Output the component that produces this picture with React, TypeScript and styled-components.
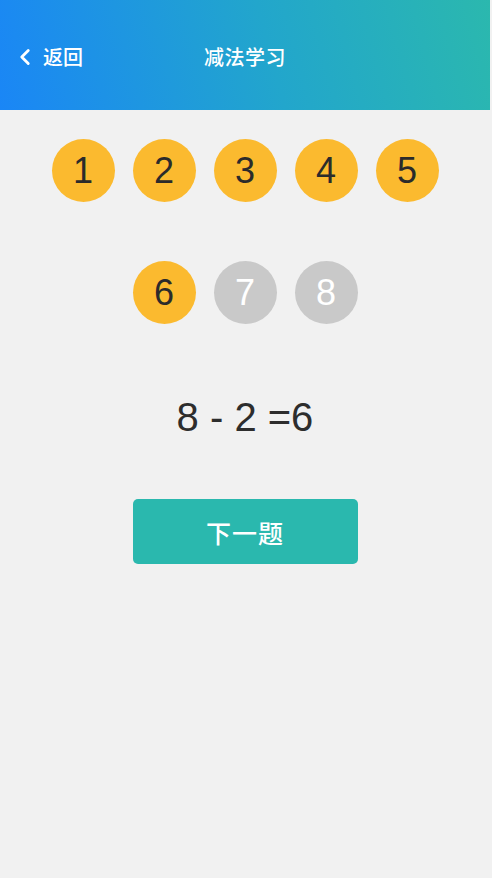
import styled, { createGlobalStyle } from "styled-components";
import { ChevronLeft } from "lucide-react";

const GlobalStyle = createGlobalStyle`
  html, body {
    margin: 0;
    padding: 0;
    background-color: #f1f1f1;
  }
  body {
    font-family: "Liberation Sans", "Noto Sans CJK SC", sans-serif;
  }
`;

const rows = [
  [1, 2, 3, 4, 5],
  [6, 7, 8],
];
const answered = 6;

const App = () => {
  return (
    <>
      <GlobalStyle />
      <Page>
        <Header>
          <BackBtn>
            <ChevronLeft size={26} strokeWidth={2.6} />
            返回
          </BackBtn>
          <Title>减法学习</Title>
        </Header>

        <Content>
          {rows.map((row, i) => (
            <CircleRow key={i}>
              {row.map((n) => (
                <Circle key={n} done={n <= answered}>
                  {n}
                </Circle>
              ))}
            </CircleRow>
          ))}

          <Equation>8 - 2 =6</Equation>

          <NextBtn>下一题</NextBtn>
        </Content>
      </Page>
    </>
  );
};

export default App;

const Page = styled.div`
  width: 490px;
  min-height: 878px;
  background-color: #f1f1f1;
`;

const Header = styled.div`
  position: relative;
  display: flex;
  align-items: center;
  justify-content: center;

  height: 110px;
  box-sizing: border-box;
  padding-top: 2px;

  background: linear-gradient(75deg, #1a86f6 0%, #22a6cc 55%, #2bb8ae 100%);
  color: white;
`;

const BackBtn = styled.div`
  position: absolute;
  left: 12px;
  top: 42px;
  display: flex;
  align-items: center;
  gap: 5px;

  font-size: 20px;
  font-weight: 500;
`;

const Title = styled.div`
  font-size: 20px;
  font-weight: 500;
  letter-spacing: 0.5px;
`;

const Content = styled.div`
  display: flex;
  flex-direction: column;
  align-items: center;
  padding-top: 29px;
`;

const CircleRow = styled.div`
  display: flex;
  justify-content: center;
  gap: 18px;
  margin-bottom: 59px;
`;

const Circle = styled.div<{ done: boolean }>`
  display: flex;
  align-items: center;
  justify-content: center;

  width: 63px;
  height: 63px;
  border-radius: 50%;

  background-color: ${(p) => (p.done ? "#fbba2f" : "#c9c9c9")};
  color: ${(p) => (p.done ? "#2b2b2b" : "#ffffff")};
  font-size: 36px;
`;

const Equation = styled.div`
  margin-top: 11px;
  font-size: 40px;
  color: #2d2d2d;
  line-height: 46px;
`;

const NextBtn = styled.div`
  display: flex;
  align-items: center;
  justify-content: center;

  width: 225px;
  height: 65px;
  margin-top: 59px;

  background-color: #2ab8ae;
  border-radius: 5px;

  color: white;
  font-size: 25px;
  font-weight: 500;
  letter-spacing: 1px;
`;
